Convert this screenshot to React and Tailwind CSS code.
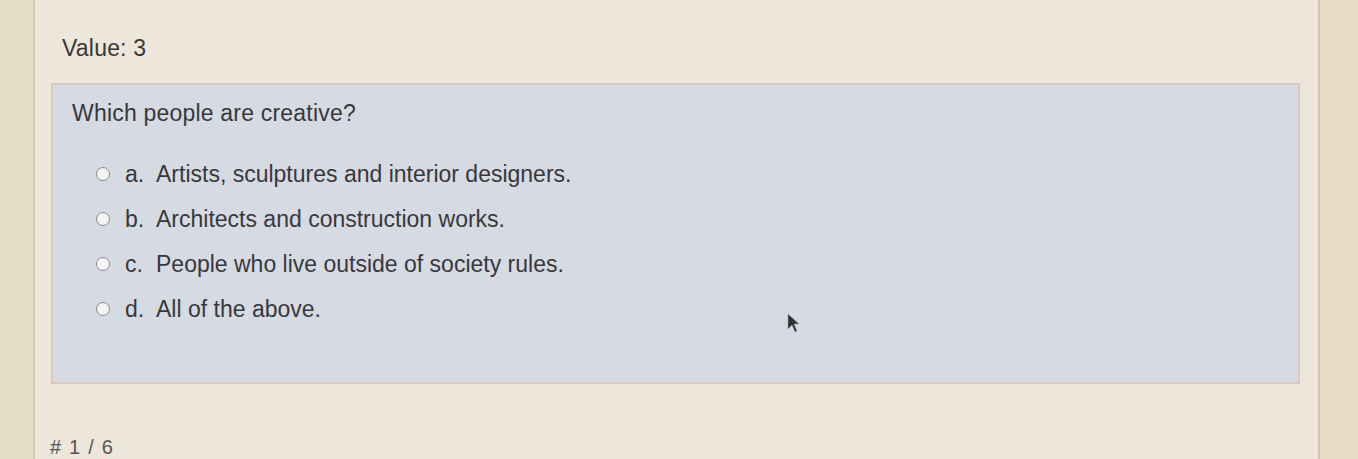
import React from 'react';

const options = [
  { key: 'a', text: 'Artists, sculptures and interior designers.' },
  { key: 'b', text: 'Architects and construction works.' },
  { key: 'c', text: 'People who live outside of society rules.' },
  { key: 'd', text: 'All of the above.' },
];

function Radio() {
  return <span className="inline-block w-[14px] h-[14px] rounded-full border border-[#8a8a8a] bg-[#f4f4f2] shrink-0" />;
}

export default function App() {
  return (
    <div className="w-[1358px] h-[459px] overflow-hidden flex bg-[#e4dac6] text-[#38383b]" style={{ fontFamily: '"Liberation Sans", Arial, sans-serif' }}>
      <div className="w-[35px] shrink-0 bg-[#e5dcc8] border-r-2 border-[#d9c9b3]" />

      <div className="flex-1 relative bg-[#ece7da] pt-[35px] pl-[27px] pr-[18px] flex flex-col">
        <div className="text-[23px] leading-[26px] tracking-[0.2px]">Value: 3</div>

        <div className="relative mt-[22px] -ml-[11px] h-[301px] bg-[#d6dae3] border-2 border-[#d8c9c0] pt-[15px] pl-[19px]">
          <div className="text-[23px] leading-[26px] tracking-[0.2px]">Which people are creative?</div>
          <div className="mt-[35px] flex flex-col gap-[19px] pl-[24px]">
            {options.map(o => (
              <div key={o.key} className="flex items-center h-[26px]">
                <Radio />
                <span className="ml-[15px] w-[31px] text-[23px] leading-[26px]">{o.key}.</span>
                <span className="text-[23px] leading-[26px]">{o.text}</span>
              </div>
            ))}
          </div>
          <svg className="absolute left-[734px] top-[228px]" width="14" height="20" viewBox="0 0 14 20">
            <path d="M1 1 L1 16 L5 12 L8 19 L10 18 L7 11 L12 11 Z" fill="#2e2e33" stroke="#9a9aa0" strokeWidth="0.6" />
          </svg>
        </div>

        <div className="mt-auto mb-[1px] -ml-[12px] text-[20px] leading-[22px] tracking-[8px] text-[#555555]">#1/6</div>
      </div>

      <div className="w-[40px] shrink-0 bg-[#e7dcc6] border-l-2 border-[#dcc0b0]" />
    </div>
  );
}
